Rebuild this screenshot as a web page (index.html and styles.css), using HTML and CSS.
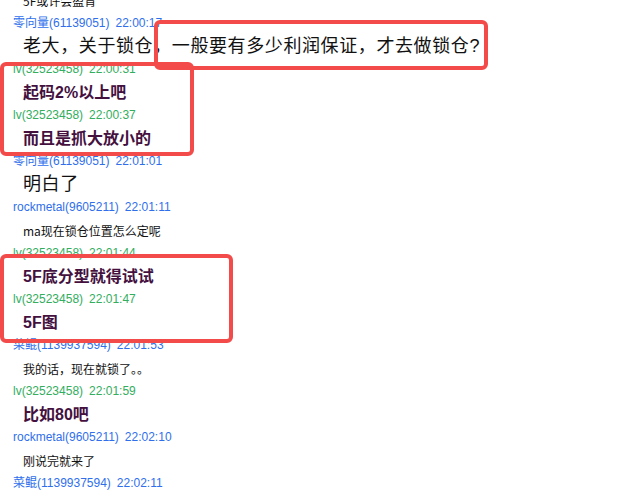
FILE: index.html
```html
<!DOCTYPE html>
<html lang="zh-CN">
<head>
    <meta charset="UTF-8">
    <meta name="viewport" content="width=device-width, initial-scale=1.0">
    <title>聊天记录</title>
    <link rel="stylesheet" href="styles.css">
</head>
<body>
<div class="log">
    <div class="msg">
        <div class="text small">5F或许会盈肯</div>
    </div>
    <div class="msg">
        <div class="who blue">零向量(61139051)<span class="time">22:00:17</span></div>
        <div class="text big">老大，关于锁仓，一般要有多少利润保证，才去做锁仓?</div>
    </div>
    <div class="msg">
        <div class="who green">lv(32523458)<span class="time">22:00:31</span></div>
        <div class="text strong">起码2%以上吧</div>
    </div>
    <div class="msg">
        <div class="who green">lv(32523458)<span class="time">22:00:37</span></div>
        <div class="text strong">而且是抓大放小的</div>
    </div>
    <div class="msg">
        <div class="who blue">零向量(61139051)<span class="time">22:01:01</span></div>
        <div class="text big">明白了</div>
    </div>
    <div class="msg">
        <div class="who blue">rockmetal(9605211)<span class="time">22:01:11</span></div>
        <div class="text small">ma现在锁仓位置怎么定呢</div>
    </div>
    <div class="msg">
        <div class="who green">lv(32523458)<span class="time">22:01:44</span></div>
        <div class="text strong">5F底分型就得试试</div>
    </div>
    <div class="msg">
        <div class="who green">lv(32523458)<span class="time">22:01:47</span></div>
        <div class="text strong">5F图</div>
    </div>
    <div class="msg">
        <div class="who blue">菜鲲(1139937594)<span class="time">22:01:53</span></div>
        <div class="text small">我的话，现在就锁了。。</div>
    </div>
    <div class="msg">
        <div class="who green">lv(32523458)<span class="time">22:01:59</span></div>
        <div class="text strong">比如80吧</div>
    </div>
    <div class="msg">
        <div class="who blue">rockmetal(9605211)<span class="time">22:02:10</span></div>
        <div class="text small">刚说完就来了</div>
    </div>
    <div class="msg">
        <div class="who blue">菜鲲(1139937594)<span class="time">22:02:11</span></div>
    </div>
</div>

<!-- highlight marks drawn over the log -->
<div class="mark mark-question"></div>
<div class="mark mark-answer"></div>
<div class="mark mark-bottom"></div>
</body>
</html>
```

FILE: styles.css
```css
body {
    font-family: 'Liberation Sans', 'Noto Sans CJK SC', sans-serif;
    margin: 0;
    padding: 0;
    background-color: #fff;
    position: relative;
    height: 495px;
    overflow: hidden;
}
.log {
    margin-top: -11px;
}
.who {
    font-size: 12px;
    line-height: 23px;
    padding-left: 13px;
}
.who .time {
    margin-left: 6px;
}
.blue {
    color: #2f6fec;
}
.green {
    color: #33ad5e;
}
.text {
    line-height: 23px;
    padding-left: 23px;
    color: #111;
}
.small {
    font-size: 12px;
    font-family: 'Noto Sans CJK SC', sans-serif;
}
.big {
    font-size: 18px;
    letter-spacing: 0.6px;
}
.strong {
    font-size: 16px;
    font-weight: bold;
    color: #44113f;
}
.mark {
    position: absolute;
    box-sizing: border-box;
    border: 4px solid #f34a4a;
    border-radius: 6px;
}
.mark-question {
    left: 154px;
    top: 20px;
    width: 334px;
    height: 50px;
}
.mark-answer {
    left: 0;
    top: 62px;
    width: 194px;
    height: 94px;
}
.mark-bottom {
    left: 0;
    top: 254px;
    width: 233px;
    height: 89px;
}
```
